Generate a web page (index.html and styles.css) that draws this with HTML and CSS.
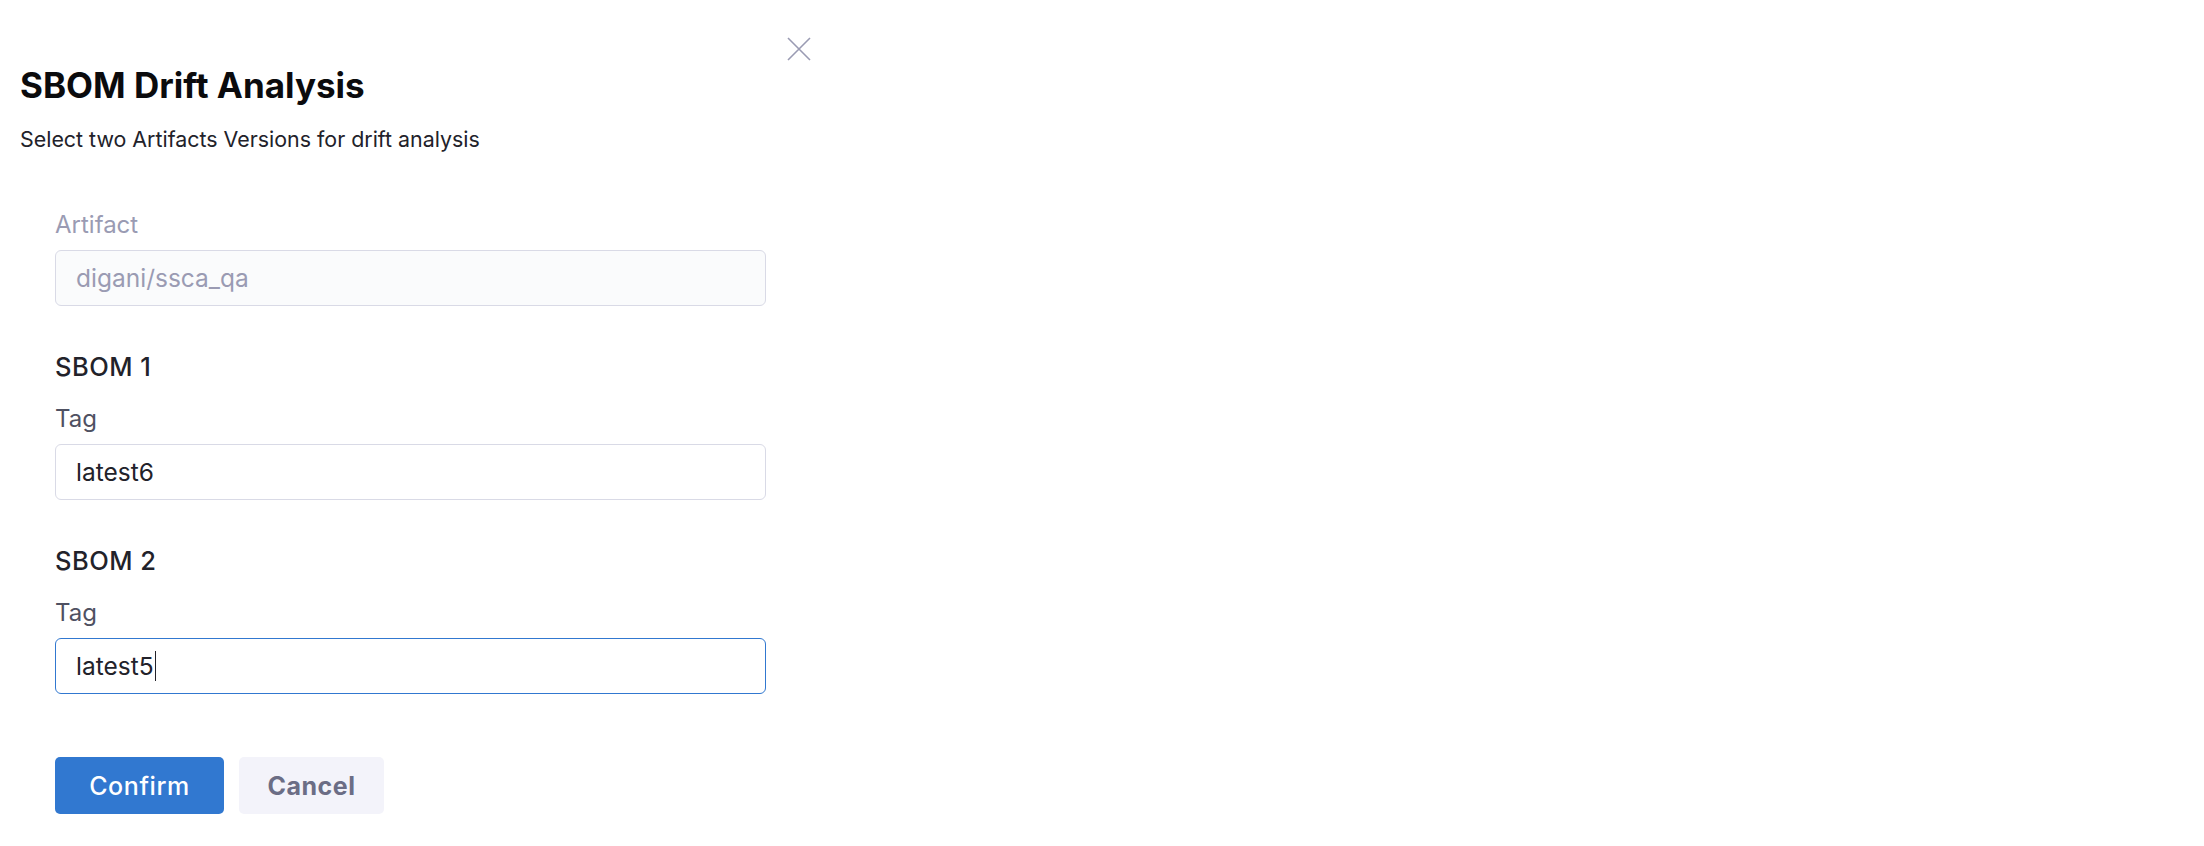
FILE: index.html
```html
<!DOCTYPE html>
<html lang="en">

<head>
    <meta charset="UTF-8" />
    <meta name="viewport" content="width=device-width, initial-scale=1.0" />
    <title>SBOM Drift Analysis</title>
    <link rel="stylesheet" href="styles.css">
</head>

<body>
    <div class="dialog">
        <button class="closeBtn" aria-label="Close">
            <svg width="24" height="24" viewBox="0 0 24 24">
                <path d="M1 1 L23 23 M23 1 L1 23" stroke="#9a9bb3" stroke-width="1.6" fill="none" />
            </svg>
        </button>
        <div class="header">
            <h2 class="title">SBOM Drift Analysis</h2>
            <p class="subtitle">Select two Artifacts Versions for drift analysis</p>
        </div>

        <form class="form">
            <div class="group">
                <label class="label disabled">Artifact</label>
                <div class="field readonly">digani/ssca_qa</div>
            </div>

            <div class="section">
                <p class="sectionTitle">SBOM 1</p>
                <div class="group">
                    <label class="label">Tag</label>
                    <div class="field">latest6</div>
                </div>
            </div>

            <div class="section">
                <p class="sectionTitle">SBOM 2</p>
                <div class="group">
                    <label class="label">Tag</label>
                    <div class="field focused">latest5<span class="caret"></span></div>
                </div>
            </div>

            <div class="actions">
                <button type="button" class="btn primary">Confirm</button>
                <button type="button" class="btn secondary">Cancel</button>
            </div>
        </form>
    </div>
</body>

</html>
```

FILE: styles.css
```css
body {
    margin: 0;
    background-color: white;
    font-family: Inter, "Noto Sans", sans-serif;
    color: #22222a;
}

.dialog {
    position: relative;
    width: 830px;
    padding: 64px 0 0 20px;
    box-sizing: border-box;
}

.closeBtn {
    position: absolute;
    top: 37px;
    left: 787px;
    padding: 0;
    border: none;
    background: none;
    width: 24px;
    height: 24px;
    cursor: pointer;
}

.closeBtn svg {
    display: block;
}

.title {
    margin: 0;
    font-size: 35px;
    line-height: 42px;
    font-weight: 700;
    color: #0b0b0d;
}

.subtitle {
    margin: 19px 0 0 0;
    font-size: 21.4px;
    line-height: 28px;
    color: #22222a;
}

.form {
    width: 711px;
    margin: 57px 0 0 35px;
}

.group {
    display: flex;
    flex-direction: column;
}

.label {
    font-size: 24px;
    line-height: 30px;
    color: #4f5162;
    margin-bottom: 10px;
}

.label.disabled {
    color: #9a9bb3;
}

.field {
    height: 56px;
    box-sizing: border-box;
    border: 1.5px solid #d9dae6;
    border-radius: 6px;
    padding: 0 20px;
    display: flex;
    align-items: center;
    font-size: 24.5px;
    color: #22222a;
    background-color: white;
}

.field.readonly {
    background-color: #fafbfc;
    color: #9a9bb3;
}

.field.focused {
    border-color: #3178d0;
}

.caret {
    display: inline-block;
    width: 1.5px;
    height: 30px;
    margin-left: 1px;
    background-color: #22222a;
}

.section {
    margin-top: 46px;
}

.sectionTitle {
    margin: 0 0 22px 0;
    font-size: 25.5px;
    line-height: 30px;
    font-weight: 500;
    letter-spacing: 0.5px;
    color: #22222a;
}

.actions {
    display: flex;
    gap: 15px;
    margin-top: 63px;
}

.btn {
    height: 57px;
    border: none;
    border-radius: 5px;
    font-family: Inter, "Noto Sans", sans-serif;
    font-size: 25px;
    cursor: pointer;
}

.primary {
    width: 169px;
    background-color: #3178d0;
    color: white;
    font-weight: 500;
    letter-spacing: 0.6px;
}

.secondary {
    width: 145px;
    background-color: #f3f3fa;
    color: #6b6d85;
    font-weight: 700;
    letter-spacing: 0.5px;
}
```
